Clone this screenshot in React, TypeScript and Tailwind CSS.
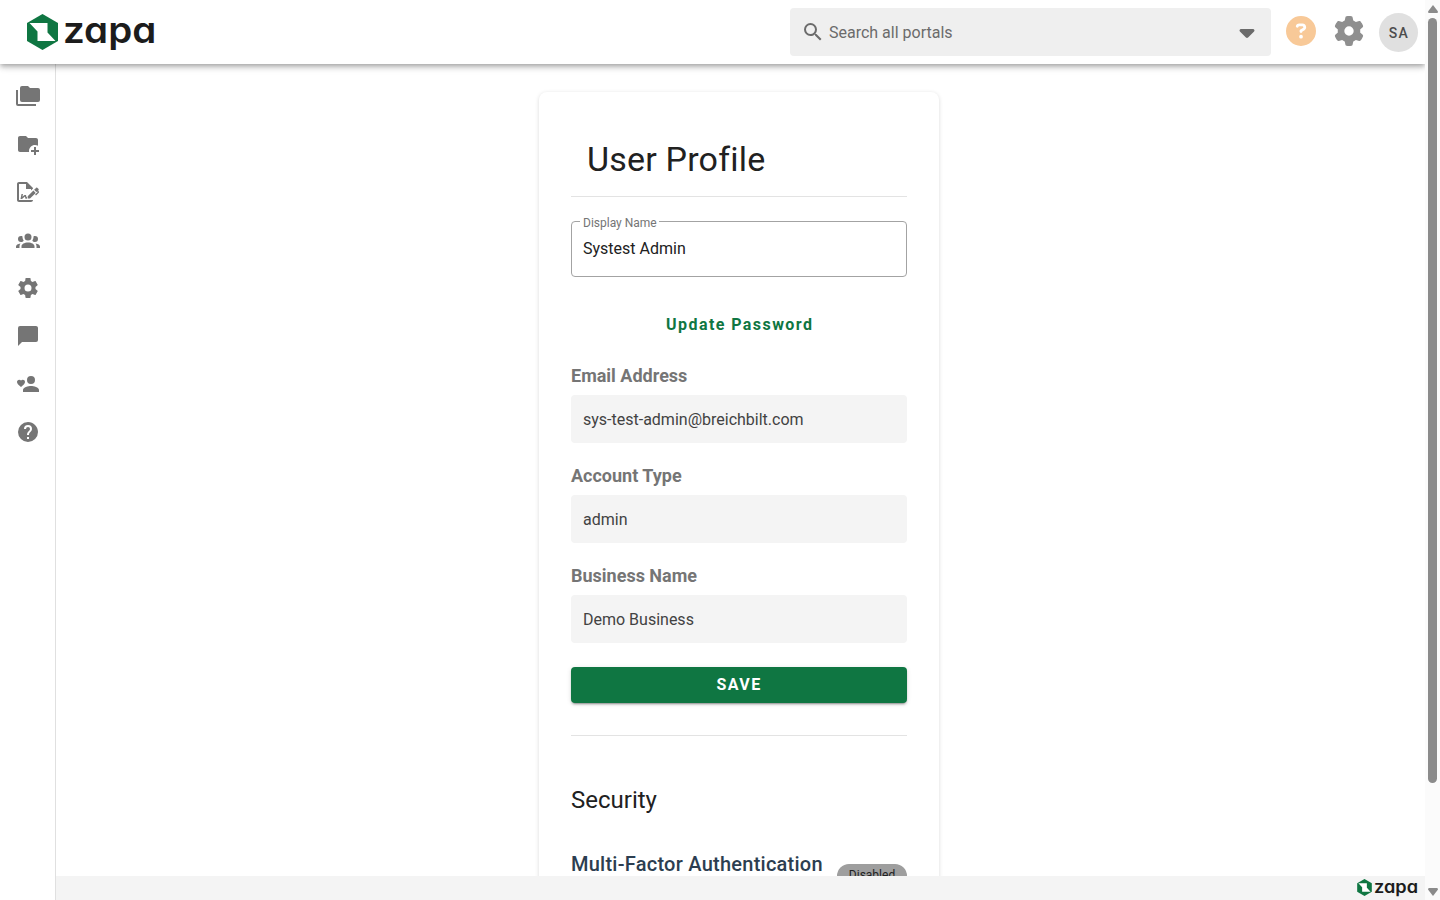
import { FaCaretDown, FaCircleQuestion, FaGear } from 'react-icons/fa6'
import { MdSearch } from 'react-icons/md'

const navItems = [
  {
    label: 'Portals',
    path: 'M22,4H14L12,2H6A2,2 0 0,0 4,4V16A2,2 0 0,0 6,18H22A2,2 0 0,0 24,16V6A2,2 0 0,0 22,4M2,6H0V11H0V20A2,2 0 0,0 2,22H20V20H2V6Z',
  },
  {
    label: 'New portal',
    path: 'M13 19C13 19.34 13.04 19.67 13.09 20H4C2.9 20 2 19.11 2 18V6C2 4.89 2.89 4 4 4H10L12 6H20C21.1 6 22 6.89 22 8V13.81C21.12 13.3 20.1 13 19 13C15.69 13 13 15.69 13 19M20 18V15H18V18H15V20H18V23H20V20H23V18H20Z',
  },
  {
    label: 'Signatures',
    path: 'M19.7 12.9L14 18.6H11.7V16.3L17.4 10.6L19.7 12.9M23.1 12.1C23.1 12.4 22.8 12.7 22.5 13L20 15.5L19.1 14.6L21.7 12L21.1 11.4L20.4 12.1L18.1 9.8L20.3 7.7C20.5 7.5 20.9 7.5 21.2 7.7L22.6 9.1C22.8 9.3 22.8 9.7 22.6 10C22.4 10.2 22.2 10.4 22.2 10.6C22.2 10.8 22.4 11 22.6 11.2C22.9 11.5 23.2 11.8 23.1 12.1M3 20V4H10V9H15V10.5L17 8.5V8L11 2H3C1.9 2 1 2.9 1 4V20C1 21.1 1.9 22 3 22H15C16.1 22 17 21.1 17 20H3M11 17.1C10.8 17.1 10.6 17.2 10.5 17.2L10 15H8.5L6.4 16.7L7 14H5.5L4.5 19H6L8.9 16.4L9.5 18.7H10.5L11 18.6V17.1Z',
  },
  {
    label: 'Users',
    path: 'M12,5.5A3.5,3.5 0 0,1 15.5,9A3.5,3.5 0 0,1 12,12.5A3.5,3.5 0 0,1 8.5,9A3.5,3.5 0 0,1 12,5.5M5,8C5.56,8 6.08,8.15 6.53,8.42C6.38,9.85 6.8,11.27 7.66,12.38C7.16,13.34 6.16,14 5,14A3,3 0 0,1 2,11A3,3 0 0,1 5,8M19,8A3,3 0 0,1 22,11A3,3 0 0,1 19,14C17.84,14 16.84,13.34 16.34,12.38C17.2,11.27 17.62,9.85 17.47,8.42C17.92,8.15 18.44,8 19,8M5.5,18.25C5.5,16.18 8.41,14.5 12,14.5C15.59,14.5 18.5,16.18 18.5,18.25V20H5.5V18.25M0,20V18.5C0,17.11 1.89,15.94 4.45,15.6C3.86,16.28 3.5,17.22 3.5,18.25V20H0M24,20H20.5V18.25C20.5,17.22 20.14,16.28 19.55,15.6C22.11,15.94 24,17.11 24,18.5V20Z',
  },
  {
    label: 'Settings',
    path: 'M12,15.5A3.5,3.5 0 0,1 8.5,12A3.5,3.5 0 0,1 12,8.5A3.5,3.5 0 0,1 15.5,12A3.5,3.5 0 0,1 12,15.5M19.43,12.97C19.47,12.65 19.5,12.33 19.5,12C19.5,11.67 19.47,11.34 19.43,11L21.54,9.37C21.73,9.22 21.78,8.95 21.66,8.73L19.66,5.27C19.54,5.05 19.27,4.96 19.05,5.05L16.56,6.05C16.04,5.66 15.5,5.32 14.87,5.07L14.5,2.42C14.46,2.18 14.25,2 14,2H10C9.75,2 9.54,2.18 9.5,2.42L9.13,5.07C8.5,5.32 7.96,5.66 7.44,6.05L4.95,5.05C4.73,4.96 4.46,5.05 4.34,5.27L2.34,8.73C2.21,8.95 2.27,9.22 2.46,9.37L4.57,11C4.53,11.34 4.5,11.67 4.5,12C4.5,12.33 4.53,12.65 4.57,12.97L2.46,14.63C2.27,14.78 2.21,15.05 2.34,15.27L4.34,18.73C4.46,18.95 4.73,19.03 4.95,18.95L7.44,17.94C7.96,18.34 8.5,18.68 9.13,18.93L9.5,21.58C9.54,21.82 9.75,22 10,22H14C14.25,22 14.46,21.82 14.5,21.58L14.87,18.93C15.5,18.67 16.04,18.34 16.56,17.94L19.05,18.95C19.27,19.03 19.54,18.95 19.66,18.73L21.66,15.27C21.78,15.05 21.73,14.78 21.54,14.63L19.43,12.97Z',
  },
  {
    label: 'Messages',
    path: 'M20,2H4A2,2 0 0,0 2,4V22L6,18H20A2,2 0 0,0 22,16V4C22,2.89 21.1,2 20,2Z',
  },
  {
    label: 'Refer a friend',
    path: 'M15,14C12.33,14 7,15.33 7,18V20H23V18C23,15.33 17.67,14 15,14M15,12A4,4 0 0,0 19,8A4,4 0 0,0 15,4A4,4 0 0,0 11,8A4,4 0 0,0 15,12M5,15L4.4,14.5C2.4,12.6 1,11.4 1,9.9C1,8.7 2,7.7 3.2,7.7C3.9,7.7 4.6,8 5,8.5C5.4,8 6.1,7.7 6.8,7.7C8,7.7 9,8.6 9,9.9C9,11.4 7.6,12.6 5.6,14.5L5,15Z',
  },
  {
    label: 'Help',
    path: 'M15.07,11.25L14.17,12.17C13.45,12.89 13,13.5 13,15H11V14.5C11,13.39 11.45,12.39 12.17,11.67L13.41,10.41C13.78,10.05 14,9.55 14,9A2,2 0 0,0 12,7A2,2 0 0,0 10,9H8A4,4 0 0,1 12,5A4,4 0 0,1 16,9C16,9.88 15.64,10.67 15.07,11.25M13,19H11V17H13M12,2A10,10 0 0,0 2,12A10,10 0 0,0 12,22A10,10 0 0,0 22,12C22,6.47 17.5,2 12,2Z',
  },
]

const details = [
  { label: 'Email Address', value: 'sys-test-admin@breichbilt.com' },
  { label: 'Account Type', value: 'admin' },
  { label: 'Business Name', value: 'Demo Business' },
]

function LogoMark({ className }: { className: string }) {
  return (
    <svg viewBox="0 0 31 36" className={className}>
      <path d="M15.5 0L31 9V27L15.5 36L0 27V9Z" fill="#0f7642" />
      <path d="M2.5 9H20.5V18.5L28.5 27H10.5V17.5Z" fill="#fff" />
    </svg>
  )
}

function Header() {
  return (
    <header className="relative z-10 flex h-16 shrink-0 items-center bg-white pl-[26.5px] pr-[7px] shadow-[0_2px_4px_-1px_rgba(0,0,0,0.2),0_4px_5px_0_rgba(0,0,0,0.14),0_1px_10px_0_rgba(0,0,0,0.12)]">
      <LogoMark className="h-9 w-[31px]" />
      <span className="ml-[5px] origin-left -translate-y-[2px] scale-x-[1.07] font-[Inter,sans-serif] text-[36px] leading-[48px] font-semibold text-[#1c1c1c] [font-family:Inter,sans-serif] [font-feature-settings:'cv11']">
        zapa
      </span>

      <div className="ml-auto flex h-12 w-[481px] items-center rounded bg-[#efefef] pl-[11px] pr-[15px] text-[#6b6b6b]">
        <MdSearch className="size-6" />
        <input
          className="ml-1 w-0 flex-1 bg-transparent pt-0.5 text-base outline-none placeholder:text-[#6b6b6b] placeholder:opacity-100"
          placeholder="Search all portals"
        />
        <FaCaretDown className="h-6 w-[18px]" />
      </div>
      <FaCircleQuestion className="ml-[15px] size-[30px] -translate-y-px text-[#f8c998]" />
      <FaGear className="ml-[18px] size-[30px] -translate-y-px text-[#8f8f8f]" />
      <div className="ml-[15px] mt-px flex size-[39px] items-center justify-center rounded-full bg-[#e0e0e0] pl-px text-sm font-medium tracking-[1.25px] text-[#4d4d4d]">
        SA
      </div>
    </header>
  )
}

function Sidebar() {
  return (
    <nav className="flex w-14 shrink-0 flex-col items-center gap-6 border-r border-[#e0e0e0] bg-white pt-5">
      {navItems.map(item => (
        <a key={item.label} aria-label={item.label} className="block size-6 text-[#757575]">
          <svg viewBox="0 0 24 24" className="size-6" fill="currentColor">
            <path d={item.path} />
          </svg>
        </a>
      ))}
    </nav>
  )
}

function ProfileCard() {
  return (
    <section className="mr-[3px] h-[900px] w-[400px] rounded-lg bg-white px-8 pt-10 shadow-[0_1px_4px_rgba(0,0,0,0.15)]">
      <h1 className="h-[65px] border-b border-[#e3e3e3] px-4 pt-[7px] text-[34px] leading-10 tracking-[0.2px] text-[#212121]">
        User Profile
      </h1>

      <fieldset className="mt-[18px] h-[62px] rounded border border-[#a3a3a3] pl-[9px]">
        <legend className="-ml-px h-3 pl-[3px] pr-0.5 text-xs leading-4 text-[#757575]">Display Name</legend>
        <input
          className="mt-[10px] block w-[300px] bg-transparent pl-0.5 text-base leading-6 text-[#212121] outline-none"
          defaultValue="Systest Admin"
        />
      </fieldset>

      <button className="mt-[30px] block h-9 w-full pl-[1.43px] text-base font-bold tracking-[1.43px] text-[#0f7642]">
        Update Password
      </button>

      {details.map(item => (
        <div key={item.label} className="mt-5 h-20">
          <div className="text-lg leading-[26px] font-bold text-[#757575]">{item.label}</div>
          <div className="mt-1.5 flex h-12 items-center rounded bg-[#f4f4f4] px-3 pt-px text-base text-[#424242]">
            {item.value}
          </div>
        </div>
      ))}

      <button className="mt-6 block h-9 w-full rounded bg-[#0f7642] text-base font-bold tracking-[1.43px] text-white shadow-[0_3px_1px_-2px_rgba(0,0,0,0.2),0_2px_2px_0_rgba(0,0,0,0.14),0_1px_5px_0_rgba(0,0,0,0.12)]">
        SAVE
      </button>

      <hr className="mt-8 border-[#e3e3e3]" />

      <h2 className="mt-12 text-2xl leading-8 text-[#212121]">Security</h2>
      <div className="mt-8 flex justify-between">
        <h3 className="text-xl leading-8 font-medium tracking-[0.25px] whitespace-nowrap text-[#2c3e50]">
          Multi-Factor Authentication
        </h3>
        <span className="mt-4 flex h-6 w-[70px] items-center justify-center rounded-full bg-[#9e9e9e] pb-0.5 text-xs text-[#212121]">
          Disabled
        </span>
      </div>
    </section>
  )
}

function ScrollBar() {
  return (
    <div className="flex w-[15px] shrink-0 flex-col items-center bg-[#fbfbfb] pt-[5px] pb-1">
      <svg viewBox="0 0 10 8" className="h-2 w-2.5" fill="#8b8b8b">
        <path d="M5 0L10 6.5Q10 8 9 8H1Q0 8 0 6.5Z" />
      </svg>
      <div className="mt-[5px] h-[765px] w-[9px] rounded-full bg-[#8b8b8b]" />
      <svg viewBox="0 0 10 8" className="mt-auto h-2 w-2.5" fill="#8b8b8b">
        <path d="M5 8L10 1.5Q10 0 9 0H1Q0 0 0 1.5Z" />
      </svg>
    </div>
  )
}

export default function App() {
  return (
    <div className="flex h-[900px] w-[1440px] overflow-hidden bg-white font-[Roboto,sans-serif]">
      <div className="flex flex-1 flex-col overflow-hidden">
        <Header />
        <div className="flex min-h-0 flex-1">
          <Sidebar />
          <div className="flex flex-1 flex-col">
            <main className="flex min-h-0 flex-1 items-start justify-center overflow-hidden pt-7">
              <ProfileCard />
            </main>
            <footer className="flex h-6 shrink-0 items-center justify-end bg-[#f4f4f4] pr-[10px]">
              <LogoMark className="mb-px h-[17px] w-[15px]" />
              <span className="ml-[2px] origin-left -translate-y-[1.5px] scale-x-[1.07] text-[17px] leading-6 font-semibold text-[#1c1c1c] [font-family:Inter,sans-serif] [font-feature-settings:'cv11']">
                zapa
              </span>
            </footer>
          </div>
        </div>
      </div>
      <ScrollBar />
    </div>
  )
}
